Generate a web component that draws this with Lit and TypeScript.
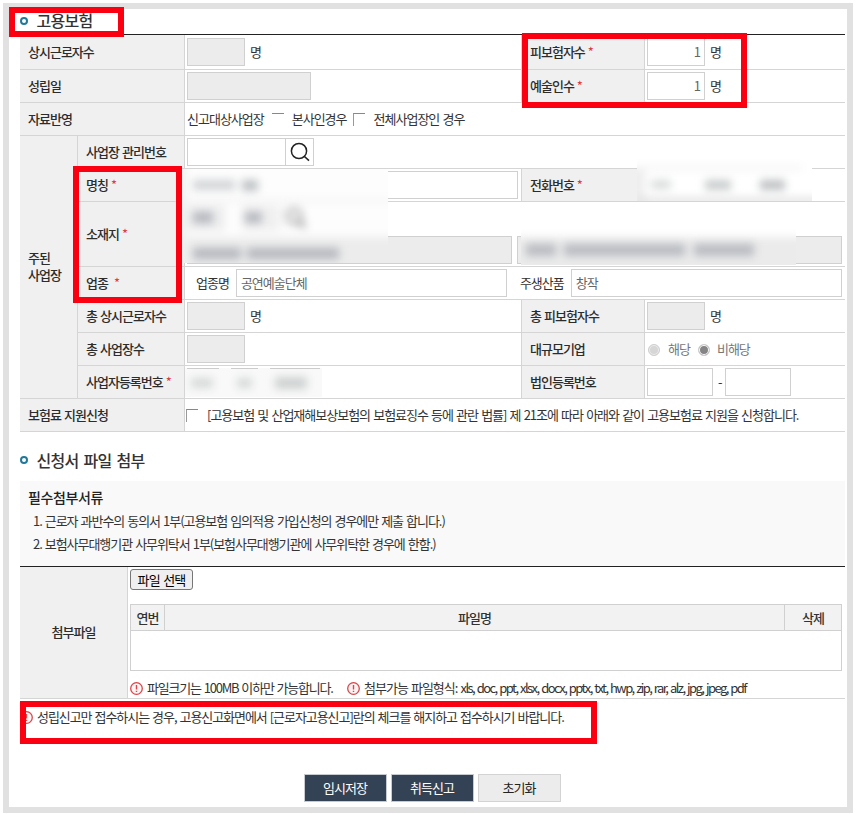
import { LitElement, html, css, svg } from "lit";
import { customElement, property } from "lit/decorators.js";

@customElement("warn-icon")
class WarnIcon extends LitElement {
  static styles = css`
    :host { display: inline-flex; width: 13px; height: 13px; flex: none; }
    svg { width: 13px; height: 13px; }
  `;
  render() {
    return html`<svg viewBox="0 0 13 13" fill="none">
      ${svg`<circle cx="6.5" cy="6.5" r="5.8" fill="#fff3f3" stroke="#d9474c" stroke-width="1.3"/>
      <path d="M6.5 3v4.4M6.5 8.7v1.3" stroke="#d9474c" stroke-width="1.4"/>`}
    </svg>`;
  }
}

@customElement("section-title")
class SectionTitle extends LitElement {
  @property() text = "";
  static styles = css`
    :host { display: flex; align-items: center; }
    .ring { box-sizing: border-box; width: 8px; height: 8px; border: 2.5px solid #21799a; border-radius: 50%; }
    .text { margin-left: 8.5px; font-size: 16px; font-weight: 500; letter-spacing: -0.7px; word-spacing: 2px; line-height: 20px; padding-bottom: 1px; color: #333; }
  `;
  render() {
    return html`<span class="ring"></span><span class="text">${this.text}</span>`;
  }
}

@customElement("app-root")
class AppRoot extends LitElement {
  static styles = css`
    :host {
      display: block; position: relative; width: 858px; height: 814px; overflow: hidden; background: #fff;
      font-family: "Noto Sans CJK KR", "Noto Sans", sans-serif; font-size: 13px; line-height: 17px;
      letter-spacing: -1px; word-spacing: 1.2px; color: #333;
    }
    * { box-sizing: border-box; }
    .frame { margin-left: 3px; width: 850px; height: 810px; border: 6px solid #e1e1e1; padding: 0 2px 0 11px; position: relative; top: 3px; }
    .title1 { height: 25px; padding-bottom: 2px; }
    .title2 { height: 49px; padding-top: 7px; }

    .form {
      display: grid; border-top: 1px solid #222;
      grid-template-columns: 58px 107px 336px 124px 200px;
      grid-template-rows: 35px repeat(4, 33px) 65px repeat(5, 33px);
    }
    .c { display: flex; align-items: center; border-bottom: 1px solid #d5d5d5; padding-left: 2px; white-space: nowrap; min-width: 0; }
    .h { background: #f0f0f0; border-right: 1px solid #d5d5d5; padding-left: 8px; font-weight: 500; color: #2c2c2c; padding-bottom: 2px; }
    .r { border-left: 1px solid #d5d5d5; }
    .s2 { grid-column: span 2; }
    .s3 { grid-column: span 3; }
    .group { grid-row: span 7; }
    i { font-style: normal; font-weight: 400; color: #e03a3e; margin-left: 3px; }
    .t { padding-bottom: 2px; }
    .in { height: 28px; border: 1px solid #d0d0d0; background: #fff; flex: none; display: flex; align-items: center; color: #666; padding: 0 0 1px 4px; }
    .off { background: #ececec; }
    .w58 { width: 58px; }
    .w66 { width: 66px; }
    .w99 { width: 99px; }
    .w124 { width: 124px; }
    .wname { width: 331px; }
    .waddr { width: 325px; margin-right: 5px; }
    .wbiz { width: 271px; margin-left: 7px; }
    .num { justify-content: flex-end; padding-right: 4px; }
    .unit { margin-left: 5px; padding-bottom: 2px; }
    .find { width: 28px; height: 28px; border: 1px solid #d0d0d0; border-left: 0; display: flex; align-items: center; justify-content: center; }
    .find svg { width: 20px; height: 20px; flex: none; }
    .box { width: 12px; height: 13px; border-top: 1px solid #888; border-left: 1px solid #999; flex: none; }
    .toponly { border-left: 0; }
    .b1 { margin-left: 8px; }
    .t1 { margin-left: 8px; }
    .b2 { margin-left: 6px; }
    .t2 { margin-left: 9px; }
    .b3 { margin-left: -1px; }
    .law { margin-left: 9px; }
    .biz { padding-left: 11px; }
    .prod { margin-left: 13px; }
    .addr { align-items: flex-end; padding-bottom: 2px; }
    .radio { width: 12px; height: 12px; border-radius: 50%; border: 1px solid #cfcfcf; flex: none; background: #d6d6d6; box-shadow: inset 0 0 0 1px #eee; margin-top: 1px; }
    .on { background: #858585; box-shadow: inset 0 0 0 1px #fff; }
    .choice { color: #777; padding-left: 3px; }
    .opt1 { margin: 0 8px 0 8px; }
    .opt2 { margin-left: 7px; }
    .dash { margin: 0 4px 0 5px; width: 3px; padding-bottom: 2px; }

    .docs { height: 85px; background: #f9f9f9; padding: 6px 0 0 8px; }
    .docs b { display: block; font-weight: 500; font-size: 14px; letter-spacing: -0.4px; line-height: 20px; color: #222; margin-bottom: 3px; }
    .docs p { margin: 0; padding-left: 5px; line-height: 22.5px; letter-spacing: -1.05px; }
    .attach { display: grid; grid-template-columns: 108px 717px; height: 133px; border-top: 1px solid #222; border-bottom: 1px solid #d5d5d5; }
    .attach .side { background: #f0f0f0; border-right: 1px solid #d5d5d5; display: flex; align-items: center; justify-content: center; padding-bottom: 2px; font-weight: 500; color: #2c2c2c; }
    .body { padding: 2px 3px 0 2px; }
    .pick { display: flex; align-items: center; justify-content: center; width: 63px; height: 21px; border: 1px solid #767676; border-radius: 3px; background: #efefef; color: #000; letter-spacing: -0.8px; padding-bottom: 1px; }
    .files { display: grid; grid-template-columns: 34px 1fr 56px; grid-template-rows: 26px 40px; border: 1px solid #d0d0d0; border-bottom: 0; margin-top: 14px; }
    .files div { border-bottom: 1px solid #d0d0d0; border-right: 1px solid #d0d0d0; background: #f2f2f2; display: flex; align-items: center; justify-content: center; font-weight: 500; padding-bottom: 1px; }
    .files .last { border-right: 0; }
    .files .empty { grid-column: span 3; background: #fff; border-right: 0; }
    .hints { display: flex; align-items: center; margin-top: 9px; height: 17px; white-space: nowrap; }
    .hints span { margin-left: 4px; padding-bottom: 2px; }
    .hints .size { width: 187px; letter-spacing: -1.2px; }
    .hints warn-icon + span + warn-icon { margin-left: 13px; }
    .hints .ext { margin: 0; letter-spacing: -1.56px; }
    .notice { display: flex; align-items: center; height: 18px; margin-top: 9px; white-space: nowrap; letter-spacing: -1.06px; }
    .notice span { margin-left: 4px; padding-bottom: 2px; }
    .actions { display: flex; justify-content: center; gap: 4px; margin-top: 48px; padding-right: 1px; }
    .btn { width: 83px; height: 28px; border: 1px solid #c5cbd0; background: #334355; color: #fff; display: flex; align-items: center; justify-content: center; padding-bottom: 1px; }
    .light { background: #ececec; border-color: #d3d3d3; color: #222; }

    .mark { position: absolute; border: 6px solid #fb0010; }
    .m1 { left: 9px; top: 7px; width: 115px; height: 30px; }
    .m2 { left: 522px; top: 33px; width: 225px; height: 75px; }
    .m3 { left: 73px; top: 166px; width: 109px; height: 137px; }
    .m4 { left: 20px; top: 701px; width: 577px; height: 43px; }

    .veil { position: absolute; overflow: hidden; }
    .veil svg { display: block; }
    .v1 { left: 182px; top: 169px; width: 206px; height: 94px; }
    .v2 { left: 637px; top: 158px; width: 175px; height: 43px; }
    .v3 { left: 521px; top: 228px; width: 275px; height: 37px; }
    .v4 { left: 185px; top: 368px; width: 137px; height: 29px; }
    .soft { filter: blur(4px); }
    .wide { filter: blur(4.5px); }
  `;

  private veils() {
    return html`
      <div class="veil v1"><svg width="206" height="94">
        <g class="wide">
          <rect x="-20" y="-20" width="250" height="140" fill="#fdfdfd"/>
          <rect x="-20" y="-20" width="24" height="140" fill="#efefef"/>
          <rect x="5" y="30" width="220" height="3" fill="#f0f0f0"/>
          <rect x="5" y="36" width="38" height="26" fill="#eeeeef"/>
          <rect x="60" y="36" width="38" height="26" fill="#f0f0f1"/>
          <rect x="5" y="68" width="220" height="50" fill="#ececec"/>
        </g>
        <g class="soft" fill="#b4b7bd">
          <rect x="11" y="11" width="42" height="10" fill="#d0d3d6"/><rect x="60" y="11" width="16" height="11" fill="#bcc0c3"/>
          <rect x="11" y="43" width="20" height="11"/><rect x="63" y="43" width="17" height="11"/>
          <circle cx="112" cy="47" r="7" fill="none" stroke="#b4b4b4" stroke-width="4"/><path d="M116 52l7 6" stroke="#999" stroke-width="4"/>
          <rect x="11" y="79" width="48" height="11"/><rect x="65" y="79" width="48" height="11"/><rect x="110" y="79" width="47" height="11"/>
        </g></svg></div>
      <div class="veil v2"><svg width="175" height="43">
        <g class="wide">
          <rect x="-20" y="-20" width="220" height="90" fill="#fff"/>
          <rect x="-20" y="10" width="28" height="60" fill="#ededed"/>
          <rect x="0" y="8" width="165" height="4" fill="#f3f3f3"/>
          <rect x="0" y="40" width="200" height="6" fill="#dedede"/>
        </g>
        <g class="soft" fill="#c8cbcc">
          <rect x="14" y="22" width="20" height="9" fill="#d9dcdc"/><rect x="68" y="22" width="26" height="10"/><rect x="123" y="22" width="25" height="10" fill="#bcbfc1"/>
        </g></svg></div>
      <div class="veil v3"><svg width="275" height="37">
        <g class="wide"><rect x="-20" y="-20" width="320" height="90" fill="#fff"/><rect x="-20" y="9" width="320" height="60" fill="#ebebeb"/></g>
        <g class="soft" fill="#b8bbc1">
          <rect x="5" y="16" width="30" height="12"/><rect x="43" y="16" width="121" height="12"/><rect x="173" y="16" width="60" height="12"/>
        </g></svg></div>
      <div class="veil v4"><svg width="137" height="29">
        <rect width="137" height="29" fill="#f9f9f9"/>
        <path d="M2 .5h32M46 .5h27M85 .5h50" stroke="#ccc"/>
        <g class="soft" fill="#d6d9d9">
          <rect x="6" y="10" width="22" height="10"/><rect x="52" y="10" width="15" height="10"/><rect x="90" y="9" width="32" height="12" fill="#ced1d1"/>
        </g></svg></div>`;
  }

  render() {
    return html`
      <div class="frame">
        <section-title class="title1" text="고용보험"></section-title>
        <div class="form">
          <div class="c h s2">상시근로자수</div>
          <div class="c"><span class="in off w58"></span><span class="unit">명</span></div>
          <div class="c h r">피보험자수<i>*</i></div>
          <div class="c"><span class="in w58 num">1</span><span class="unit">명</span></div>

          <div class="c h s2">성립일</div>
          <div class="c"><span class="in off w124"></span></div>
          <div class="c h r">예술인수<i>*</i></div>
          <div class="c"><span class="in w58 num">1</span><span class="unit">명</span></div>

          <div class="c h s2">자료반영</div>
          <div class="c s3">
            <span class="t">신고대상사업장</span><span class="box toponly b1"></span><span class="t t1">본사인경우</span>
            <span class="box b2"></span><span class="t t2">전체사업장인 경우</span>
          </div>

          <div class="c h group">주된<br>사업장</div>
          <div class="c h">사업장 관리번호</div>
          <div class="c s3"><span class="in w99"></span><span class="find"><svg viewBox="0 0 20 20" fill="none" stroke="#222" stroke-width="1.5"><circle cx="9" cy="9" r="7.6"/><path d="M14.2 14.2L19 18.6"/></svg></span></div>

          <div class="c h">명칭<i>*</i></div>
          <div class="c"><span class="in wname"></span></div>
          <div class="c h r">전화번호<i>*</i></div>
          <div class="c"></div>

          <div class="c h">소재지<i>*</i></div>
          <div class="c s3 addr"><span class="in off waddr"></span><span class="in off waddr"></span></div>

          <div class="c h">업종<i>&nbsp;*</i></div>
          <div class="c s3 biz"><span class="t">업종명</span><span class="in wbiz">공연예술단체</span><span class="t prod">주생산품</span><span class="in wbiz">창작</span></div>

          <div class="c h">총 상시근로자수</div>
          <div class="c"><span class="in off w58"></span><span class="unit">명</span></div>
          <div class="c h r">총 피보험자수</div>
          <div class="c"><span class="in off w58"></span><span class="unit">명</span></div>

          <div class="c h">총 사업장수</div>
          <div class="c"><span class="in off w58"></span></div>
          <div class="c h r">대규모기업</div>
          <div class="c choice"><span class="radio"></span><span class="t opt1">해당</span><span class="radio on"></span><span class="t opt2">비해당</span></div>

          <div class="c h">사업자등록번호<i>*</i></div>
          <div class="c"></div>
          <div class="c h r">법인등록번호</div>
          <div class="c"><span class="in w66"></span><span class="dash">-</span><span class="in w66"></span></div>

          <div class="c h s2">보험료 지원신청</div>
          <div class="c s3"><span class="box b3"></span><span class="t law">[고용보험 및 산업재해보상보험의 보험료징수 등에 관란 법률] 제 21조에 따라 아래와 같이 고용보험료 지원을 신청합니다.</span></div>
        </div>

        <section-title class="title2" text="신청서 파일 첨부"></section-title>
        <div class="docs">
          <b>필수첨부서류</b>
          <p>1. 근로자 과반수의 동의서 1부(고용보험 임의적용 가입신청의 경우에만 제출 합니다.)</p>
          <p>2. 보험사무대행기관 사무위탁서 1부(보험사무대행기관에 사무위탁한 경우에 한함.)</p>
        </div>
        <div class="attach">
          <div class="side">첨부파일</div>
          <div class="body">
            <div class="pick">파일 선택</div>
            <div class="files">
              <div>연번</div><div>파일명</div><div class="last">삭제</div>
              <div class="empty"></div>
            </div>
            <div class="hints">
              <warn-icon></warn-icon><span class="size">파일크기는 100MB 이하만 가능합니다.</span>
              <warn-icon></warn-icon><span>첨부가능 파일형식: <span class="ext">xls, doc, ppt, xlsx, docx, pptx, txt, hwp, zip, rar, alz, jpg, jpeg, pdf</span></span>
            </div>
          </div>
        </div>
        <div class="notice"><warn-icon></warn-icon><span>성립신고만 접수하시는 경우, 고용신고화면에서 [근로자고용신고]란의 체크를 해지하고 접수하시기 바랍니다.</span></div>
        <div class="actions">
          <div class="btn">임시저장</div><div class="btn">취득신고</div><div class="btn light">초기화</div>
        </div>
      </div>
      ${this.veils()}
      <div class="mark m1"></div><div class="mark m2"></div><div class="mark m3"></div><div class="mark m4"></div>
    `;
  }
}
